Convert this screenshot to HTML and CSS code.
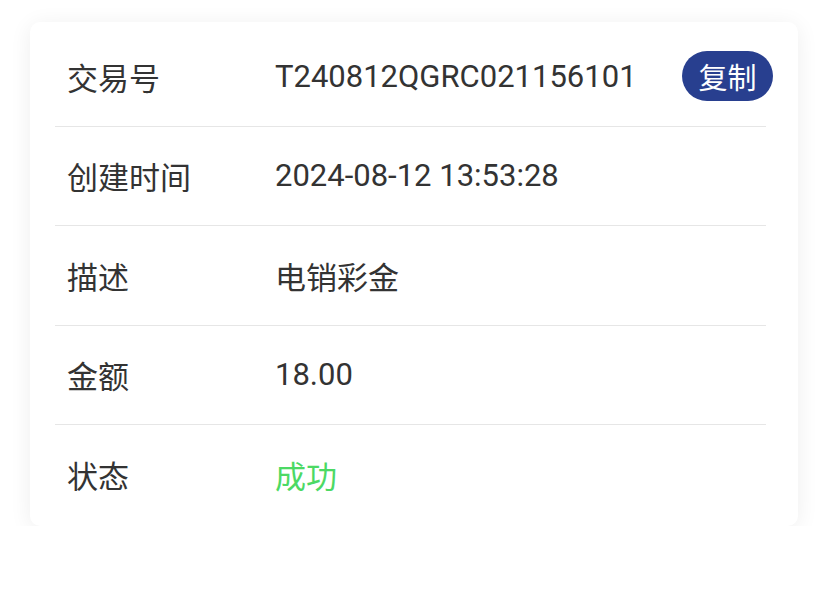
FILE: index.html
```
<!DOCTYPE html>
<html lang="zh">
<head>
  <meta charset="UTF-8" />
  <title>交易详情</title>
  <meta name="viewport" content="width=device-width, initial-scale=1.0" />
  <link rel="stylesheet" href="styles.css">
</head>
<body>
  <div class="card">
    <div class="row">
      <div class="label">交易号</div>
      <div class="value">T240812QGRC021156101</div>
      <button class="copy-btn">复制</button>
    </div>
    <div class="row">
      <div class="label">创建时间</div>
      <div class="value">2024-08-12 13:53:28</div>
    </div>
    <div class="row">
      <div class="label">描述</div>
      <div class="value">电销彩金</div>
    </div>
    <div class="row">
      <div class="label">金额</div>
      <div class="value">18.00</div>
    </div>
    <div class="row">
      <div class="label">状态</div>
      <div class="value success">成功</div>
    </div>
  </div>
</body>
</html>
```

FILE: styles.css
```
body {
  font-family: Roboto, "Noto Sans CJK SC", sans-serif;
  background-color: #fff;
  color: #333;
  margin: 0;
  padding: 22px 30px 0;
}

.card {
  background: #fff;
  border-radius: 10px;
  box-shadow: 0 3px 22px rgba(0, 0, 0, 0.07);
  padding: 5px 0 1px;
}

.row {
  display: flex;
  align-items: center;
  height: 99.5px;
  margin: 0 32px 0 25px;
  padding-left: 12px;
  box-sizing: border-box;
  border-bottom: 1px solid #e6e6e6;
  font-size: 31px;
}

.row:last-child {
  border-bottom: none;
}

.label {
  width: 208px;
  flex: 0 0 208px;
}

.value {
  flex: 1;
}

.success {
  color: #4cd964;
}

.copy-btn {
  font-family: inherit;
  font-size: 29px;
  color: #fff;
  background-color: #283f8f;
  border: none;
  border-radius: 25px;
  height: 50px;
  width: 91px;
  padding: 0;
  margin-right: -7px;
  cursor: pointer;
}
```
